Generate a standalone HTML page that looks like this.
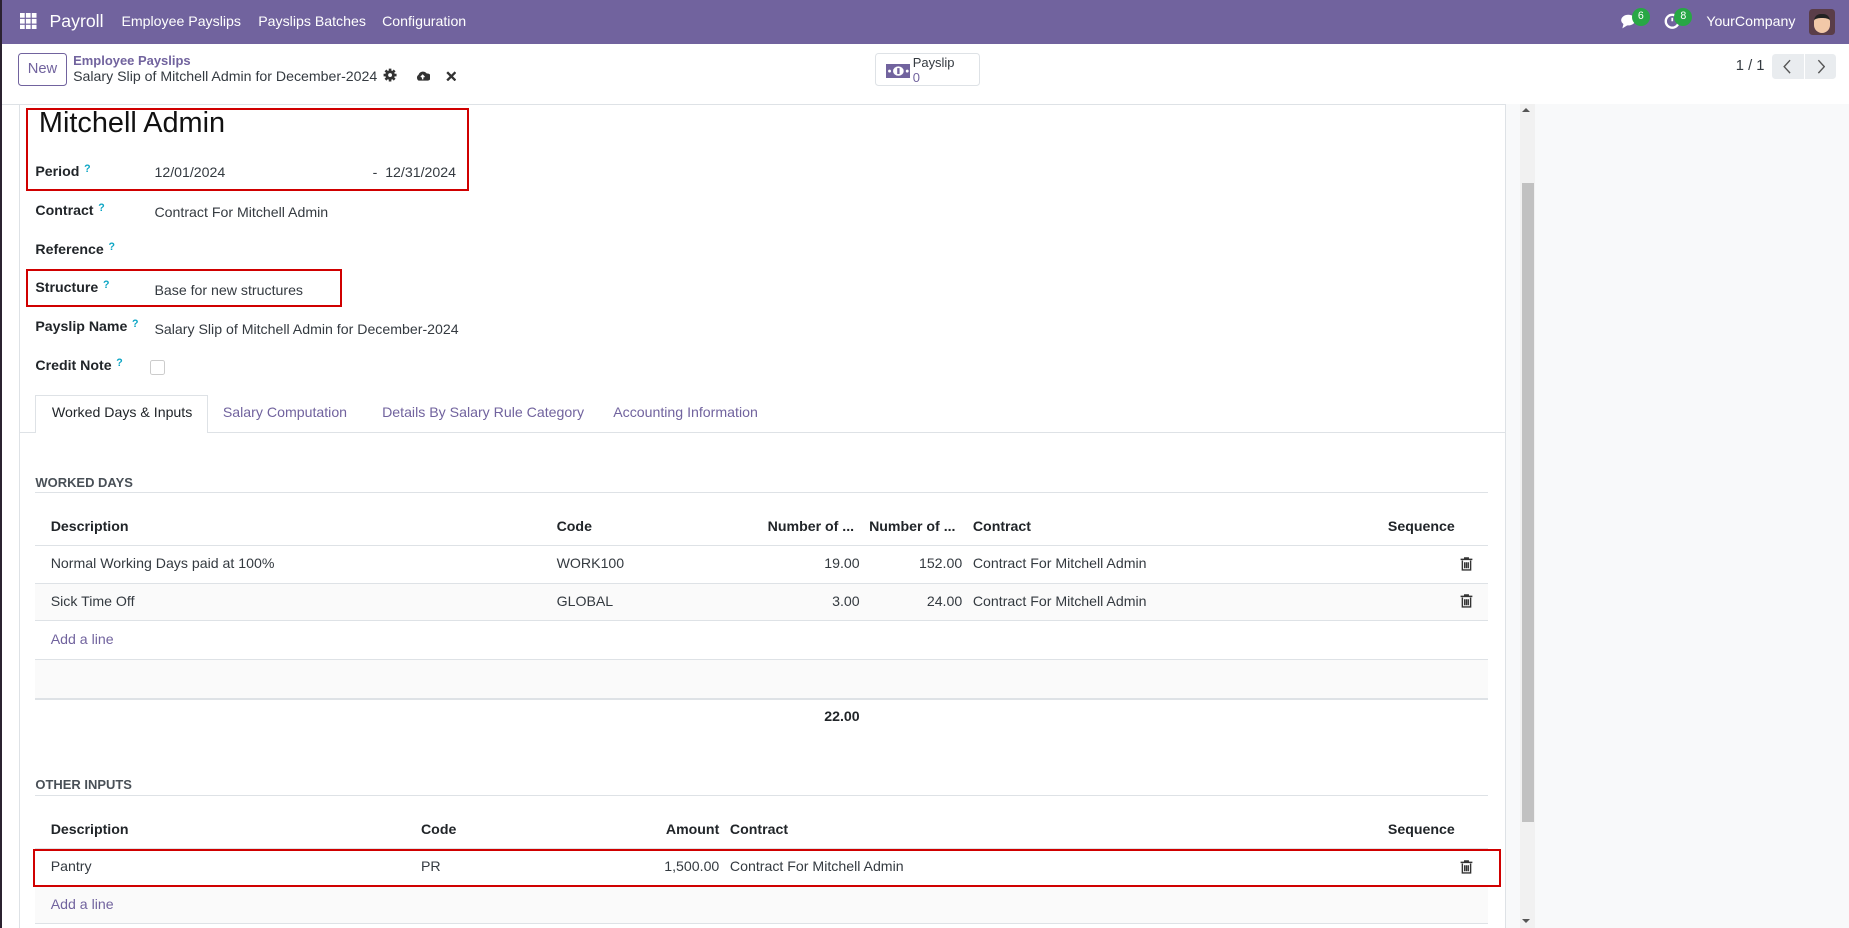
<!DOCTYPE html>
<html><head><meta charset="utf-8"><style>
html,body{margin:0;padding:0;}
body{width:1568px;height:787px;overflow:hidden;zoom:1.17921;font-family:"Liberation Sans",sans-serif;font-size:12px;color:#212529;position:relative;background:#fff;}
.a{position:absolute;white-space:nowrap;}
.nav{left:0;top:0;width:1568px;height:37px;background:#71639e;color:#fff;}
.nav .a{top:11px;font-size:12px;}
.cp{left:0;top:37px;width:1568px;height:51px;border-bottom:1px solid #dee2e6;background:#fff;}
.lbl{font-weight:bold;font-size:12px;color:#212529;}
.q{color:#0ba5c4;font-size:9px;font-weight:bold;vertical-align:top;margin-left:4px;}
.red{border:2px solid #d00000;box-sizing:border-box;}
.hl{height:1px;background:#dee2e6;}
.th{font-weight:bold;}
.purple{color:#71639e;}
</style></head><body>
<div class="a" style="left:0;top:0;width:2px;height:787px;background:#2b2230;z-index:5"></div>
<div class="a nav">
 <div class="a" style="left:17px;top:11px;width:14px;height:14px;">
  <svg width="14" height="14"><g fill="#fff"><rect x="0" y="0" width="4" height="4"/><rect x="5" y="0" width="4" height="4"/><rect x="10" y="0" width="4" height="4"/><rect x="0" y="5" width="4" height="4"/><rect x="5" y="5" width="4" height="4"/><rect x="10" y="5" width="4" height="4"/><rect x="0" y="10" width="4" height="4"/><rect x="5" y="10" width="4" height="4"/><rect x="10" y="10" width="4" height="4"/></g></svg></div>
 <div class="a" style="left:42px;top:9px;font-size:15px;">Payroll</div>
 <div class="a" style="left:103px;">Employee Payslips</div>
 <div class="a" style="left:219px;">Payslips Batches</div>
 <div class="a" style="left:324px;">Configuration</div>
 <svg class="a" style="left:1374px;top:11px" width="16" height="14"><ellipse cx="7" cy="6" rx="6" ry="4.5" fill="#fff"/><path d="M3 9 L2 13 L7 10Z" fill="#fff"/></svg>
 <div class="a" style="left:1384px;top:7px;width:15px;height:15px;border-radius:8px;background:#28a745;font-size:9px;text-align:center;line-height:15px;">6</div>
 <svg class="a" style="left:1411px;top:11px" width="14" height="14"><circle cx="7" cy="7" r="5.5" fill="none" stroke="#fff" stroke-width="2"/><path d="M7 4 V7" stroke="#fff" stroke-width="1.5"/></svg>
 <div class="a" style="left:1420px;top:7px;width:15px;height:15px;border-radius:8px;background:#28a745;font-size:9px;text-align:center;line-height:15px;">8</div>
 <div class="a" style="left:1447px;">YourCompany</div>
 <div class="a" style="left:1534px;top:8px;width:22px;height:22px;border-radius:3px;background:#5a3d48;overflow:hidden;"><div style="margin:4px 0 0 4px;width:14px;height:16px;background:#f2c8a8;border-radius:6px 6px 7px 7px;border-top:4px solid #222;box-sizing:border-box"></div></div>
</div>
<div class="a cp">
 <div class="a" style="left:15px;top:8px;width:42px;height:28px;border:1px solid #71639e;border-radius:3px;box-sizing:border-box;color:#71639e;text-align:center;line-height:26px;font-size:12.5px;">New</div>
 <div class="a purple" style="left:62px;top:8px;font-size:11px;font-weight:bold;">Employee Payslips</div>
 <div class="a" style="left:62px;top:21px;font-size:12px;color:#343a40;">Salary Slip of Mitchell Admin for December-2024</div>
 <svg class="a" style="left:325px;top:21px" width="12" height="12" viewBox="0 0 12 12"><circle cx="6" cy="6" r="4" fill="#333"/><g stroke="#333" stroke-width="2.2"><path d="M6 0.5V11.5M0.5 6H11.5M2.1 2.1L9.9 9.9M9.9 2.1L2.1 9.9"/></g><circle cx="6" cy="6" r="1.6" fill="#fff"/></svg>
 <svg class="a" style="left:352px;top:22px" width="13" height="10"><path d="M3 9 A3 3 0 0 1 3 4 A4 4 0 0 1 10 3 A3 3 0 0 1 11 9Z" fill="#333"/><path d="M6.5 8 V5 M5 6 L6.5 4.5 L8 6" stroke="#fff" stroke-width="1.2" fill="none"/></svg>
 <svg class="a" style="left:378px;top:23px" width="9" height="9"><path d="M1 1L8 8M8 1L1 8" stroke="#333" stroke-width="2"/></svg>
 <div class="a" style="left:742px;top:8px;width:89px;height:28px;border:1px solid #dee2e6;border-radius:3px;box-sizing:border-box;"></div>
 <svg class="a" style="left:751px;top:17px" width="21" height="12"><rect x="0" y="0" width="21" height="12" fill="#71639e"/><ellipse cx="10.5" cy="6" rx="4.5" ry="4" fill="#fff"/><rect x="9.5" y="3.5" width="2" height="5" fill="#71639e"/><circle cx="3" cy="6" r="1.2" fill="#fff"/><circle cx="18" cy="6" r="1.2" fill="#fff"/></svg>
 <div class="a" style="left:774px;top:10px;font-size:11px;color:#343a40;">Payslip</div>
 <div class="a purple" style="left:774px;top:22px;font-size:11px;">0</div>
 <div class="a" style="left:1472px;top:12px;font-size:12.5px;color:#343a40;">1 / 1</div>
 <div class="a" style="left:1503px;top:9px;width:54px;height:21px;background:#e9ecef;border-radius:3px;"></div>
 <div class="a" style="left:1530px;top:9px;width:1px;height:21px;background:#fff;"></div>
 <svg class="a" style="left:1512px;top:13px" width="8" height="13"><path d="M6 1 L1 6.5 L6 12" stroke="#555" fill="none" stroke-width="1.2"/></svg>
 <svg class="a" style="left:1540px;top:13px" width="8" height="13"><path d="M2 1 L7 6.5 L2 12" stroke="#555" fill="none" stroke-width="1.2"/></svg>
</div>
<div class="a" style="left:1276px;top:88px;width:292px;height:699px;background:#f8f9fa;border-left:1px solid #dee2e6;"></div>
<div class="a" style="left:1289px;top:88px;width:13px;height:699px;background:#f1f1f1;"></div>
<div class="a" style="left:1291px;top:155px;width:10px;height:542px;background:#c1c1c1;"></div>
<div class="a" style="left:1291px;top:92px;width:0;height:0;border-left:4px solid transparent;border-right:4px solid transparent;border-bottom:4px solid #555;"></div>
<div class="a" style="left:1291px;top:779px;width:0;height:0;border-left:4px solid transparent;border-right:4px solid transparent;border-top:4px solid #555;"></div>
<div class="a" style="left:16px;top:88px;width:1px;height:699px;background:#dee2e6;"></div>

<div class="a" style="left:33px;top:91px;font-size:24.5px;color:#111;">Mitchell Admin</div>
<div class="a red" style="left:22px;top:92px;width:376px;height:70px;"></div>
<div class="a lbl" style="left:30px;top:138px;">Period<span class="q">?</span></div>
<div class="a" style="left:131px;top:139px;color:#343a40;">12/01/2024</div>
<div class="a" style="left:316px;top:139px;color:#343a40;">-&nbsp; 12/31/2024</div>
<div class="a lbl" style="left:30px;top:171px;">Contract<span class="q">?</span></div>
<div class="a" style="left:131px;top:173px;color:#343a40;">Contract For Mitchell Admin</div>
<div class="a lbl" style="left:30px;top:204px;">Reference<span class="q">?</span></div>
<div class="a red" style="left:22px;top:228px;width:268px;height:32px;"></div>
<div class="a lbl" style="left:30px;top:237px;">Structure<span class="q">?</span></div>
<div class="a" style="left:131px;top:239px;color:#343a40;">Base for new structures</div>
<div class="a lbl" style="left:30px;top:270px;">Payslip Name<span class="q">?</span></div>
<div class="a" style="left:131px;top:272px;color:#343a40;">Salary Slip of Mitchell Admin for December-2024</div>
<div class="a lbl" style="left:30px;top:303px;">Credit Note<span class="q">?</span></div>
<div class="a" style="left:127px;top:305px;width:11px;height:11px;border:1px solid #ccc;border-radius:2px;"></div>

<div class="a hl" style="left:16px;top:366px;width:1260px;"></div>
<div class="a" style="left:30px;top:335px;width:146px;height:32px;border:1px solid #dee2e6;border-bottom:none;background:#fff;box-sizing:border-box;"></div>
<div class="a" style="left:44px;top:343px;font-size:12px;">Worked Days &amp; Inputs</div>
<div class="a purple" style="left:189px;top:343px;font-size:12px;">Salary Computation</div>
<div class="a purple" style="left:324px;top:343px;font-size:12px;">Details By Salary Rule Category</div>
<div class="a purple" style="left:520px;top:343px;font-size:12px;">Accounting Information</div>

<div class="a" style="left:30px;top:403px;font-size:11px;font-weight:bold;color:#495057;">WORKED DAYS</div>
<div class="a hl" style="left:30px;top:417px;width:1232px;"></div>
<div class="a th" style="left:43px;top:439px;">Description</div>
<div class="a th" style="left:472px;top:439px;">Code</div>
<div class="a th" style="left:651px;top:439px;">Number of ...</div>
<div class="a th" style="left:737px;top:439px;">Number of ...</div>
<div class="a th" style="left:825px;top:439px;">Contract</div>
<div class="a th" style="left:1177px;top:439px;">Sequence</div>
<div class="a hl" style="left:30px;top:462px;width:1232px;"></div>
<div class="a" style="left:43px;top:471px;color:#343a40;">Normal Working Days paid at 100%</div>
<div class="a" style="left:472px;top:471px;color:#343a40;">WORK100</div>
<div class="a" style="left:650px;top:471px;width:79px;text-align:right;color:#343a40;">19.00</div>
<div class="a" style="left:737px;top:471px;width:79px;text-align:right;color:#343a40;">152.00</div>
<div class="a" style="left:825px;top:471px;color:#343a40;">Contract For Mitchell Admin</div>
<div class="a" style="left:30px;top:494px;width:1232px;height:33px;background:#fafafa;border-top:1px solid #dee2e6;border-bottom:1px solid #dee2e6;box-sizing:border-box;"></div>
<div class="a" style="left:43px;top:503px;color:#343a40;">Sick Time Off</div>
<div class="a" style="left:472px;top:503px;color:#343a40;">GLOBAL</div>
<div class="a" style="left:650px;top:503px;width:79px;text-align:right;color:#343a40;">3.00</div>
<div class="a" style="left:737px;top:503px;width:79px;text-align:right;color:#343a40;">24.00</div>
<div class="a" style="left:825px;top:503px;color:#343a40;">Contract For Mitchell Admin</div>
<svg class="a" style="left:1238px;top:472px" width="11" height="12" viewBox="0 0 11 12"><path d="M4 1.5V0.8H7V1.5M0.5 2H10.5M2 3V11H9V3M4 4.5V9.5M5.5 4.5V9.5M7 4.5V9.5" stroke="#333" stroke-width="1.2" fill="none"/></svg>
<svg class="a" style="left:1238px;top:504px" width="11" height="12" viewBox="0 0 11 12"><path d="M4 1.5V0.8H7V1.5M0.5 2H10.5M2 3V11H9V3M4 4.5V9.5M5.5 4.5V9.5M7 4.5V9.5" stroke="#333" stroke-width="1.2" fill="none"/></svg>
<div class="a purple" style="left:43px;top:535px;">Add a line</div>
<div class="a" style="left:30px;top:559px;width:1232px;height:32px;background:#fafafa;border-top:1px solid #dee2e6;border-bottom:2px solid #dee2e6;"></div>
<div class="a th" style="left:650px;top:600px;width:79px;text-align:right;">22.00</div>

<div class="a" style="left:30px;top:659px;font-size:11px;font-weight:bold;color:#495057;">OTHER INPUTS</div>
<div class="a hl" style="left:30px;top:674px;width:1232px;"></div>
<div class="a th" style="left:43px;top:696px;">Description</div>
<div class="a th" style="left:357px;top:696px;">Code</div>
<div class="a th" style="left:530px;top:696px;width:80px;text-align:right;">Amount</div>
<div class="a th" style="left:619px;top:696px;">Contract</div>
<div class="a th" style="left:1177px;top:696px;">Sequence</div>
<div class="a hl" style="left:30px;top:719px;width:1232px;"></div>
<div class="a red" style="left:28px;top:720px;width:1245px;height:32px;"></div>
<div class="a" style="left:43px;top:728px;color:#343a40;">Pantry</div>
<div class="a" style="left:357px;top:728px;color:#343a40;">PR</div>
<div class="a" style="left:530px;top:728px;width:80px;text-align:right;color:#343a40;">1,500.00</div>
<div class="a" style="left:619px;top:728px;color:#343a40;">Contract For Mitchell Admin</div>
<svg class="a" style="left:1238px;top:729px" width="11" height="12" viewBox="0 0 11 12"><path d="M4 1.5V0.8H7V1.5M0.5 2H10.5M2 3V11H9V3M4 4.5V9.5M5.5 4.5V9.5M7 4.5V9.5" stroke="#333" stroke-width="1.2" fill="none"/></svg>
<div class="a" style="left:30px;top:752px;width:1232px;height:31px;background:#fafafa;border-bottom:1px solid #dee2e6;"></div>
<div class="a purple" style="left:43px;top:760px;">Add a line</div>
</body></html>
